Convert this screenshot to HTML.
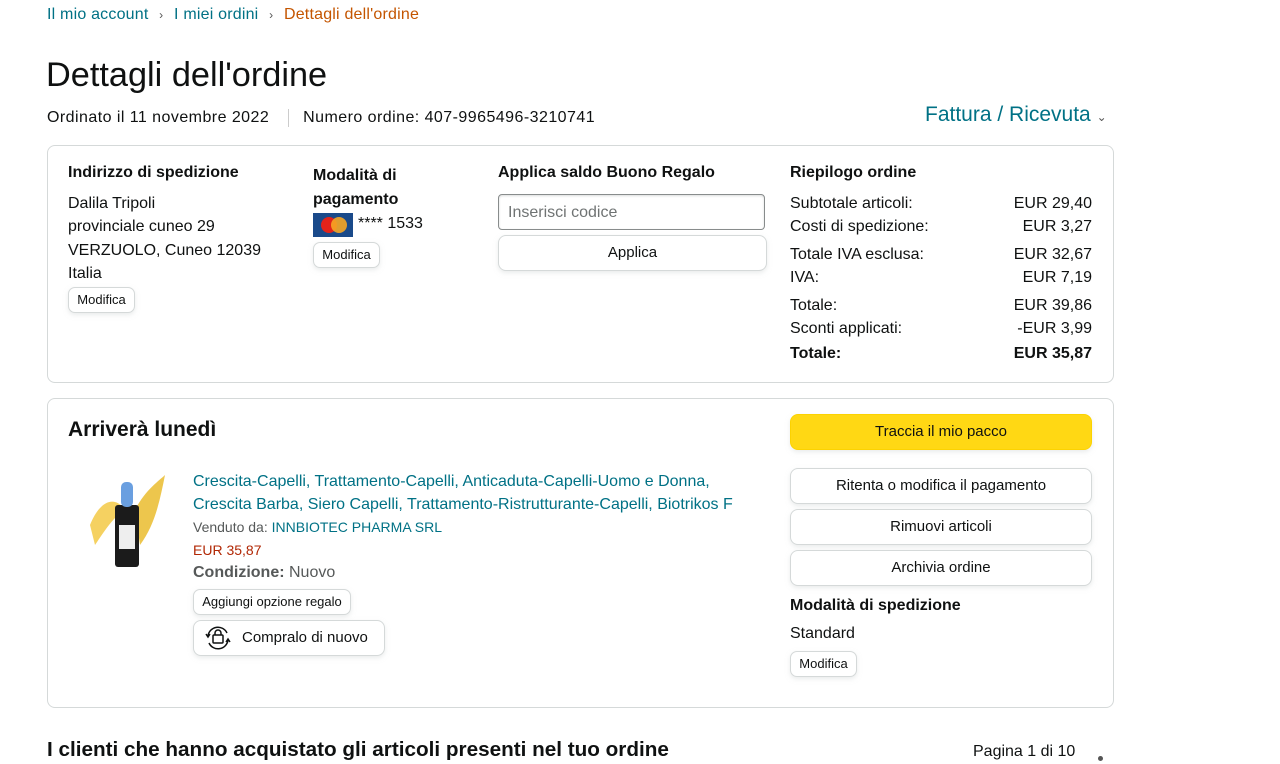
<!DOCTYPE html>
<html><head><meta charset="utf-8"><style>
*{box-sizing:border-box;margin:0;padding:0}
body{width:1280px;height:764px;overflow:hidden;background:#fff;font-family:"Liberation Sans",Arial,sans-serif;color:#0f1111;position:relative;font-size:16px}
.a{position:absolute;white-space:nowrap}
.link{color:#007185}
.box{position:absolute;border:1px solid #d5d9d9;border-radius:8px}
.btn{position:absolute;border:1px solid #d5d9d9;border-radius:8px;background:#fff;box-shadow:0 2px 5px rgba(213,217,217,.5);text-align:center;font-size:15px}
.sm{font-size:13px;border-radius:7px}
b{font-weight:700}
.r{position:absolute;right:0}
</style></head><body>
<div class="a" style="left:47px;top:6px;font-size:16px;letter-spacing:.2px"><span class="link">Il mio account</span> <span style="color:#555;font-size:12px;margin:0 6px">›</span> <span class="link">I miei ordini</span> <span style="color:#555;font-size:12px;margin:0 6px">›</span> <span style="color:#c45500">Dettagli dell'ordine</span></div>
<div class="a" style="left:46px;top:56px;font-size:34.3px">Dettagli dell'ordine</div>
<div class="a" style="left:47px;top:109px;font-size:16px;letter-spacing:.45px">Ordinato il 11 novembre 2022 <span style="display:inline-block;width:1px;height:18px;background:#ccc;margin:0 14px 0 14px;vertical-align:middle"></span>Numero ordine: 407-9965496-3210741</div>
<div class="a link" style="left:925px;top:103px;font-size:21px">Fattura / Ricevuta <span style="font-size:12px;color:#555">⌄</span></div>

<div class="box" style="left:47px;top:145px;width:1067px;height:238px"></div>
<div class="a" style="left:68px;top:164px;font-weight:700">Indirizzo di spedizione</div>
<div class="a" style="left:68px;top:192px;line-height:23.3px">Dalila Tripoli<br>provinciale cuneo 29<br>VERZUOLO, Cuneo 12039<br>Italia</div>
<div class="btn sm" style="left:68px;top:287px;width:67px;height:26px;line-height:24px">Modifica</div>
<div class="a" style="left:313px;top:164px;font-weight:700;line-height:24px;white-space:normal;width:120px">Modalità di pagamento</div>
<div class="a" style="left:313px;top:213px;width:40px;height:24px;background:#1a4a8a"><span style="position:absolute;left:8px;top:4px;width:16px;height:16px;border-radius:50%;background:#e2231a"></span><span style="position:absolute;left:18px;top:4px;width:16px;height:16px;border-radius:50%;background:#f6a623;opacity:.9"></span></div>
<div class="a" style="left:358px;top:215px">**** 1533</div>
<div class="btn sm" style="left:313px;top:242px;width:67px;height:26px;line-height:24px">Modifica</div>
<div class="a" style="left:498px;top:164px;font-weight:700">Applica saldo Buono Regalo</div>
<div class="a" style="left:498px;top:194px;width:267px;height:36px;border:1px solid #888c8c;border-radius:4px;box-shadow:inset 0 1px 2px rgba(15,17,17,.15);padding:9px 9px;color:#6f7373">Inserisci codice</div>
<div class="btn" style="left:498px;top:235px;width:269px;height:36px;line-height:34px">Applica</div>
<div class="a" style="left:790px;top:164px;width:302px;font-weight:700">Riepilogo ordine</div>
<div class="a" style="left:790px;top:192px;width:302px;line-height:23.3px">Subtotale articoli:<span class="r">EUR 29,40</span><br>Costi di spedizione:<span class="r">EUR 3,27</span></div>
<div class="a" style="left:790px;top:243px;width:302px;line-height:23.3px">Totale IVA esclusa:<span class="r">EUR 32,67</span><br>IVA:<span class="r">EUR 7,19</span></div>
<div class="a" style="left:790px;top:294px;width:302px;line-height:23.3px">Totale:<span class="r">EUR 39,86</span><br>Sconti applicati:<span class="r">-EUR 3,99</span></div>
<div class="a" style="left:790px;top:345px;width:302px;font-weight:700">Totale:<span class="r">EUR 35,87</span></div>

<div class="box" style="left:47px;top:398px;width:1067px;height:310px"></div>
<div class="a" style="left:68px;top:418px;font-size:21px;font-weight:700">Arriverà lunedì</div>
<svg class="a" style="left:85px;top:470px" width="85" height="100" viewBox="0 0 85 100"><path d="M5 55 C15 30 30 25 40 40 C30 45 20 60 10 75Z" fill="#f2c63a" opacity=".8"/><path d="M50 40 C60 20 75 10 80 5 C75 30 70 55 55 75Z" fill="#e8b820" opacity=".8"/><rect x="30" y="35" width="24" height="62" rx="3" fill="#1b1b1b"/><rect x="36" y="12" width="12" height="25" rx="5" fill="#6a9fe0"/><rect x="34" y="55" width="16" height="24" fill="#eee"/></svg>
<div class="a link" style="left:193px;top:470px;line-height:23.3px">Crescita-Capelli, Trattamento-Capelli, Anticaduta-Capelli-Uomo e Donna,<br>Crescita Barba, Siero Capelli, Trattamento-Ristrutturante-Capelli, Biotrikos F</div>
<div class="a" style="left:193px;top:519px;font-size:14px;color:#565959">Venduto da: <span class="link">INNBIOTEC PHARMA SRL</span></div>
<div class="a" style="left:193px;top:542px;font-size:14px;color:#b12704">EUR 35,87</div>
<div class="a" style="left:193px;top:564px;color:#565959"><b>Condizione:</b> Nuovo</div>
<div class="btn sm" style="left:193px;top:589px;width:158px;height:26px;line-height:24px">Aggiungi opzione regalo</div>
<div class="btn" style="left:193px;top:620px;width:192px;height:36px;line-height:34px;text-align:left;padding-left:48px">Compralo di nuovo</div>
<svg class="a" style="left:203px;top:624px" width="30" height="28" viewBox="0 0 30 28" fill="none" stroke="#0f1111" stroke-width="1.5"><path d="M5 12 A10 10 0 0 1 24 9"/><path d="M25 16 A10 10 0 0 1 6 19"/><path d="M3 10 l2 3 2-3"/><path d="M23 18 l2-3 2 3"/><rect x="10" y="11" width="10" height="8" rx="1"/><path d="M12 11 v-2 a3 3 0 0 1 6 0 v2"/></svg>
<div class="btn" style="left:790px;top:414px;width:302px;height:36px;line-height:34px;background:#ffd814;border-color:#fcd200">Traccia il mio pacco</div>
<div class="btn" style="left:790px;top:468px;width:302px;height:36px;line-height:34px">Ritenta o modifica il pagamento</div>
<div class="btn" style="left:790px;top:509px;width:302px;height:36px;line-height:34px">Rimuovi articoli</div>
<div class="btn" style="left:790px;top:550px;width:302px;height:36px;line-height:34px">Archivia ordine</div>
<div class="a" style="left:790px;top:597px;font-weight:700">Modalità di spedizione</div>
<div class="a" style="left:790px;top:625px">Standard</div>
<div class="btn sm" style="left:790px;top:651px;width:67px;height:26px;line-height:24px">Modifica</div>

<div class="a" style="left:47px;top:738px;font-size:20.7px;font-weight:700">I clienti che hanno acquistato gli articoli presenti nel tuo ordine</div>
<div class="a" style="left:973px;top:743px">Pagina 1 di 10</div>
<div class="a" style="left:1098px;top:756px;width:5px;height:5px;border-radius:50%;background:#555"></div>
</body></html>
